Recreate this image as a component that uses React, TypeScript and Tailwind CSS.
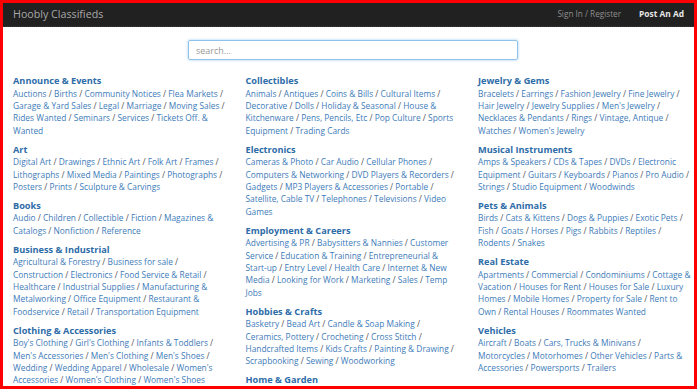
import React from 'react';

type Section = { title: string; items: string[]; breakAfter?: number };

const columns: Section[][] = [
  [
    {
      title: 'Announce & Events',
      items: ['Auctions', 'Births', 'Community Notices', 'Flea Markets', 'Garage & Yard Sales', 'Legal', 'Marriage', 'Moving Sales', 'Rides Wanted', 'Seminars', 'Services', 'Tickets Off. & Wanted'],
    },
    {
      title: 'Art',
      items: ['Digital Art', 'Drawings', 'Ethnic Art', 'Folk Art', 'Frames', 'Lithographs', 'Mixed Media', 'Paintings', 'Photographs', 'Posters', 'Prints', 'Sculpture & Carvings'],
    },
    {
      title: 'Books',
      items: ['Audio', 'Children', 'Collectible', 'Fiction', 'Magazines & Catalogs', 'Nonfiction', 'Reference'],
    },
    {
      title: 'Business & Industrial',
      items: ['Agricultural & Forestry', 'Business for sale', 'Construction', 'Electronics', 'Food Service & Retail', 'Healthcare', 'Industrial Supplies', 'Manufacturing & Metalworking', 'Office Equipment', 'Restaurant & Foodservice', 'Retail', 'Transportation Equipment'],
    },
    {
      title: 'Clothing & Accessories',
      items: ["Boy's Clothing", "Girl's Clothing", 'Infants & Toddlers', "Men's Accessories", "Men's Clothing", "Men's Shoes", 'Wedding', 'Wedding Apparel', 'Wholesale', "Women's Accessories", "Women's Clothing", "Women's Shoes"],
    },
  ],
  [
    {
      title: 'Collectibles',
      items: ['Animals', 'Antiques', 'Coins & Bills', 'Cultural Items', 'Decorative', 'Dolls', 'Holiday & Seasonal', 'House & Kitchenware', 'Pens, Pencils, Etc', 'Pop Culture', 'Sports Equipment', 'Trading Cards'],
    },
    {
      title: 'Electronics',
      items: ['Cameras & Photo', 'Car Audio', 'Cellular Phones', 'Computers & Networking', 'DVD Players & Recorders', 'Gadgets', 'MP3 Players & Accessories', 'Portable', 'Satellite, Cable TV', 'Telephones', 'Televisions', 'Video Games'],
    },
    {
      title: 'Employment & Careers',
      items: ['Advertising & PR', 'Babysitters & Nannies', 'Customer Service', 'Education & Training', 'Entrepreneurial & Start-up', 'Entry Level', 'Health Care', 'Internet & New Media', 'Looking for Work', 'Marketing', 'Sales', 'Temp Jobs'],
    },
    {
      title: 'Hobbies & Crafts',
      items: ['Basketry', 'Bead Art', 'Candle & Soap Making', 'Ceramics, Pottery', 'Crocheting', 'Cross Stitch', 'Handcrafted Items', 'Kids Crafts', 'Painting & Drawing', 'Scrapbooking', 'Sewing', 'Woodworking'],
    },
    {
      title: 'Home & Garden',
      items: ['Appliances', 'Bath', 'Bedding', 'Decor', 'Furniture', 'Gardening', 'Kitchen', 'Lighting', 'Tools'],
    },
  ],
  [
    {
      title: 'Jewelry & Gems',
      items: ['Bracelets', 'Earrings', 'Fashion Jewelry', 'Fine Jewelry', 'Hair Jewelry', 'Jewelry Supplies', "Men's Jewelry", 'Necklaces & Pendants', 'Rings', 'Vintage, Antique', 'Watches', "Women's Jewelry"],
    },
    {
      title: 'Musical Instruments',
      items: ['Amps & Speakers', 'CDs & Tapes', 'DVDs', 'Electronic Equipment', 'Guitars', 'Keyboards', 'Pianos', 'Pro Audio', 'Strings', 'Studio Equipment', 'Woodwinds'],
    },
    {
      title: 'Pets & Animals',
      items: ['Birds', 'Cats & Kittens', 'Dogs & Puppies', 'Exotic Pets', 'Fish', 'Goats', 'Horses', 'Pigs', 'Rabbits', 'Reptiles', 'Rodents', 'Snakes'],
    },
    {
      title: 'Real Estate',
      items: ['Apartments', 'Commercial', 'Condominiums', 'Cottage & Vacation', 'Houses for Rent', 'Houses for Sale', 'Luxury Homes', 'Mobile Homes', 'Property for Sale', 'Rent to Own', 'Rental Houses', 'Roommates Wanted'],
    },
    {
      title: 'Vehicles',
      items: ['Aircraft', 'Boats', 'Cars, Trucks & Minivans', 'Motorcycles', 'Motorhomes', 'Other Vehicles', 'Parts & Accessories', 'Powersports', 'Trailers'],
      breakAfter: 2,
    },
  ],
];

function CategoryBlock({ section }: { section: Section }) {
  return (
    <div className="mb-[6.5px]">
      <h3 className="text-[9.2px] leading-[12.5px] font-bold text-[#2d6ca8]">{section.title}</h3>
      <p className="text-[8.35px] leading-[12.4px] text-[#555]">
        {section.items.map((item, i) => (
          <React.Fragment key={item}>
            <a href="#" className="text-[#3d7bb9]">
              {item}
            </a>
            {i < section.items.length - 1 && ' / '}
            {section.breakAfter === i && <br />}
          </React.Fragment>
        ))}
      </p>
    </div>
  );
}

export default function App() {
  return (
    <div className="w-[697px] h-[389px] border-[3px] border-[#ff0000] overflow-hidden bg-white font-['Open_Sans',sans-serif]">
      <header className="h-[24px] bg-[#212121] border-b border-dotted border-[#3a3a3a] flex items-center justify-between pl-[10px] pr-[10px]">
        <span className="text-[10.7px] text-[#a8a8a8]">Hoobly Classifieds</span>
        <div className="flex items-center gap-[18px]">
          <a href="#" className="text-[8.2px] text-[#8e8e8e]">Sign In / Register</a>
          <a href="#" className="text-[8.4px] font-bold text-[#e6e6e6]">Post An Ad</a>
        </div>
      </header>
      <div className="flex justify-center pt-[13px] pl-[9px]">
        <input
          type="text"
          placeholder="search..."
          className="w-[330px] h-[20px] border border-[#8fc3ec] rounded-[2px] shadow-[0_0_3px_rgba(102,175,233,0.6)] px-[7px] text-[9px] placeholder:text-[#999] outline-none"
        />
      </div>
      <div className="grid grid-cols-[213px_213px_213px] gap-x-[19.5px] pl-[10px] pt-[15px]">
        {columns.map((col, ci) => (
          <div key={ci}>
            {col.map((section) => (
              <CategoryBlock key={section.title} section={section} />
            ))}
          </div>
        ))}
      </div>
    </div>
  );
}
